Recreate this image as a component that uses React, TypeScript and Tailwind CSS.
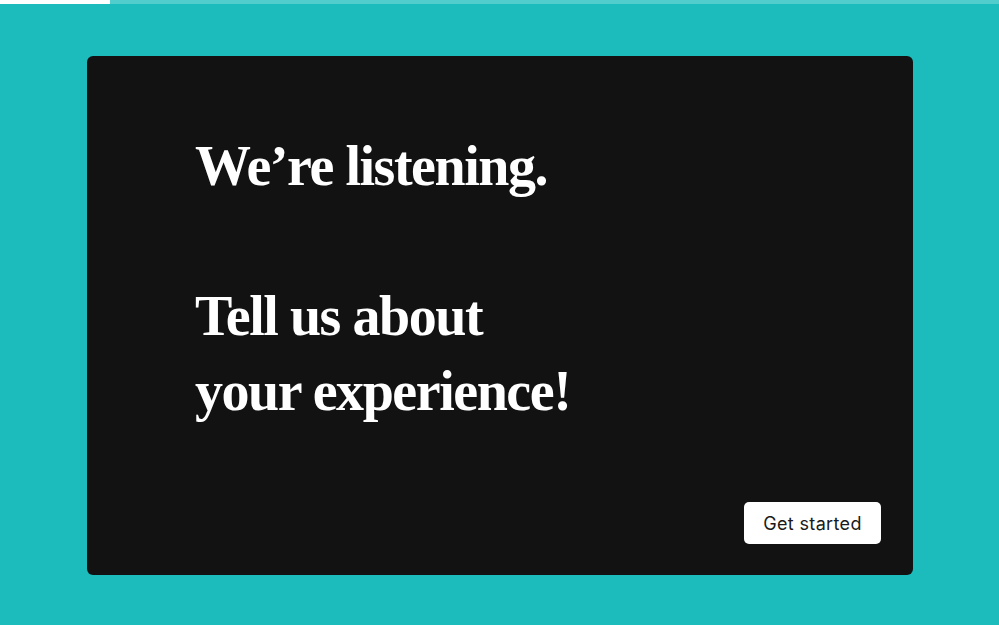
export default function App() {
  return (
    <div className="relative h-[625px] w-[999px] overflow-hidden bg-[#1cbcbc]">
      <div className="flex h-[4px] w-full">
        <div className="h-full w-[110px] bg-white" />
        <div className="h-full flex-1 bg-[#52cdcd]" />
      </div>
      <div className="px-[87px] pt-[52px]">
        <div className="flex h-[519px] w-[826px] flex-col rounded-[6px] bg-[#121212] pl-[108px] pr-[32px] pb-[31px] pt-[73px]">
          <h1
            className="text-[56px] font-bold leading-[75px] tracking-[-0.026em] text-white"
            style={{ fontFamily: '"Liberation Serif", "Times New Roman", serif' }}
          >
            We’re listening.
            <br />
            <br />
            Tell us about
            <br />
            your experience!
          </h1>
          <div className="mt-auto flex justify-end">
            <button
              className="h-[42px] w-[137px] rounded-[5px] bg-white pt-[1px] text-[18px] tracking-[0.02em] text-[#1a1a1a]"
              style={{ fontFamily: 'Inter, "Noto Sans", sans-serif' }}
            >
              Get started
            </button>
          </div>
        </div>
      </div>
    </div>
  );
}
